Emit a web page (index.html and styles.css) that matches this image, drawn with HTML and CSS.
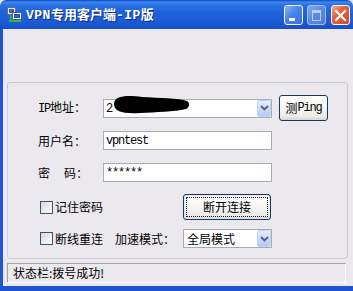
FILE: index.html
```html
<!DOCTYPE html>
<html>
<head>
<meta charset="utf-8">
<link rel="stylesheet" href="styles.css">
</head>
<body>
<div class="window">
  <div class="titlebar">
    <svg class="appicon" width="15" height="16" viewBox="0 0 15 16">
      <rect x="0.5" y="0.5" width="8" height="7" fill="#e8e8e8" stroke="#6a6a7a"/>
      <rect x="2" y="2" width="5" height="4" fill="#2a5fd8"/>
      <rect x="5.5" y="5.5" width="9" height="7" fill="#f0f0f0" stroke="#5a5a6a"/>
      <rect x="7" y="7" width="6" height="4" fill="#1f5ad0"/>
      <rect x="2" y="13" width="12" height="2" fill="#2fb84a"/>
      <rect x="3" y="8" width="1.5" height="5" fill="#2fb84a"/>
      <rect x="9" y="12.5" width="1.5" height="1" fill="#2fb84a"/>
    </svg>
    <div class="title"><span class="tlat">VPN</span>专用客户端<span class="tlat">-IP</span>版</div>
    <div class="tbtns">
      <div class="tb min"><span class="minbar"></span></div>
      <div class="tb max"><span class="maxbox"></span></div>
      <div class="tb close">
        <svg width="13" height="13" viewBox="0 0 13 13"><path d="M2 2 L11 11 M11 2 L2 11" stroke="#fff" stroke-width="2.2" stroke-linecap="square"/></svg>
      </div>
    </div>
  </div>
  <div class="client">
    <div class="group">
      <div class="row r1">
        <div class="lbl"><span class="lat">IP</span>地址：</div>
        <div class="combo ipcombo">
          <div class="val"><span class="lat">2</span></div>
          <div class="arrow"><svg width="9" height="6" viewBox="0 0 9 6"><path d="M1 1 L4.5 4.5 L8 1" fill="none" stroke="#4d6185" stroke-width="1.8"/></svg></div>
          <svg class="redact" width="78" height="20" viewBox="0 0 78 20"><path d="M2 9 C2 1, 14 0, 30 2 C48 3, 66 3, 75 6 C78 8, 78 12, 74 14 C62 17, 44 17, 28 18 C12 19, 2 17, 2 9 Z" fill="#000"/></svg>
        </div>
        <div class="btn ping">测<span class="lat">Ping</span></div>
      </div>
      <div class="row r2">
        <div class="lbl">用户名：</div>
        <div class="edit"><span class="lat">vpntest</span></div>
      </div>
      <div class="row r3">
        <div class="lbl">密<span class="sp"></span>码：</div>
        <div class="edit"><span class="lat">******</span></div>
      </div>
      <div class="row r4">
        <div class="chkwrap"><span class="chk"></span><span class="chktxt">记住密码</span></div>
        <div class="btn disc">断开连接</div>
      </div>
      <div class="row r5">
        <div class="chkwrap"><span class="chk"></span><span class="chktxt">断线重连</span><span class="mode">加速模式：</span></div>
        <div class="combo modecombo">
          <div class="val">全局模式</div>
          <div class="arrow"><svg width="9" height="6" viewBox="0 0 9 6"><path d="M1 1 L4.5 4.5 L8 1" fill="none" stroke="#4d6185" stroke-width="1.8"/></svg></div>
        </div>
      </div>
    </div>
    <div class="status">状态栏:拨号成功!</div>
  </div>
</div>
</body>
</html>
```
FILE: styles.css
```css
html, body {
  margin: 0;
  padding: 0;
}
body {
  width: 353px;
  height: 291px;
  overflow: hidden;
  font-family: "Noto Sans CJK SC", sans-serif;
  font-size: 12px;
  color: #000;
  background: #ebe9ed;
}
.window {
  width: 353px;
  height: 291px;
  display: flex;
  flex-direction: column;
}
.titlebar {
  height: 29px;
  flex: none;
  display: flex;
  align-items: center;
  padding: 0 3px 0 7px;
  border-radius: 6px 6px 0 0;
  background: linear-gradient(to bottom, #0a48cc 0%, #3f86ec 7%, #2b74e4 16%, #1f64da 40%, #1b5dd5 70%, #1650c8 100%);
}
.appicon {
  flex: none;
  margin-top: 1px;
}
.title {
  margin-left: 4px;
  color: #fff;
  font-weight: bold;
  font-size: 13px;
  line-height: 16px;
  text-shadow: 1px 1px 0 #0c2a8a;
  white-space: nowrap;
}
.tlat {
  font-family: "Liberation Mono", "Courier New", monospace;
  font-weight: bold;
  font-size: 13px;
  letter-spacing: 0.5px;
}
.tbtns {
  margin-left: auto;
  display: flex;
  gap: 4px;
  margin-top: 1px;
}
.tb {
  width: 19px;
  height: 20px;
  box-sizing: border-box;
  border: 1px solid #f4f7ff;
  border-radius: 3px;
  position: relative;
  display: flex;
  align-items: center;
  justify-content: center;
}
.tb.min {
  background: linear-gradient(135deg, #8fb2f5 0%, #4a83ea 45%, #3a70e0 100%);
}
.tb.max {
  border-color: #a9c0ee;
  background: linear-gradient(135deg, #86a9ec 0%, #5a88e2 50%, #4c7bdc 100%);
}
.tb.close {
  background: linear-gradient(135deg, #f3a890 0%, #e4603c 40%, #d8482a 100%);
  margin-left: 1px;
}
.minbar {
  position: absolute;
  left: 4px;
  bottom: 3px;
  width: 6px;
  height: 3px;
  background: #fff;
}
.maxbox {
  width: 9px;
  height: 11px;
  box-sizing: border-box;
  border: 1px solid #b9cdf4;
  border-top-width: 3px;
}
.client {
  flex: 1;
  display: flex;
  flex-direction: column;
  padding-left: 4px;
  border-left: 3px solid #1f55d6;
  border-bottom: 5px solid #1f52d0;
  background: #ebe9ed;
}
.group {
  margin-top: 53px;
  width: 341px;
  height: 177px;
  box-sizing: border-box;
  border: 1px solid #cfcdd3;
  border-radius: 3px;
  padding: 12px 0 0 29px;
  display: flex;
  flex-direction: column;
}
.row {
  display: flex;
  align-items: center;
}
.r1 { height: 26px; }
.r2 { height: 19px; margin-top: 10px; }
.r3 { height: 19px; margin-top: 13px; }
.r4 { height: 26px; margin-top: 12px; }
.r5 { height: 19px; margin-top: 9px; }
.lbl {
  width: 65px;
  padding-left: 1px;
  line-height: 14px;
  white-space: nowrap;
}
.lat {
  font-family: "Liberation Mono", "Courier New", monospace;
  font-size: 12px;
  letter-spacing: -1.2px;
}
.sp {
  display: inline-block;
  width: 14px;
}
.combo {
  position: relative;
  height: 19px;
  box-sizing: border-box;
  border: 1px solid #a5acb2;
  background: #fff;
  display: flex;
  align-items: center;
}
.ipcombo { width: 169px; }
.modecombo { width: 89px; }
.val {
  flex: 1;
  padding-left: 2px;
  line-height: 14px;
  white-space: nowrap;
}
.modecombo .val { padding-left: 3px; }
.arrow {
  width: 14px;
  height: 17px;
  box-sizing: border-box;
  border: 1px solid #c3d3f5;
  border-radius: 2px;
  background: linear-gradient(to bottom, #e6eeff 0%, #c6d6f8 60%, #b6c8f2 100%);
  display: flex;
  align-items: center;
  justify-content: center;
}
.redact {
  position: absolute;
  left: 8px;
  top: -5px;
}
.btn {
  box-sizing: border-box;
  border: 1px solid #1c3562;
  border-radius: 3px;
  background: linear-gradient(to bottom, #ffffff 0%, #f6f6f3 50%, #ecebe6 85%, #d8d6d2 100%);
  display: flex;
  align-items: center;
  justify-content: center;
  white-space: nowrap;
  line-height: 14px;
}
.ping {
  width: 49px;
  height: 26px;
  margin-left: 7px;
}
.disc {
  width: 88px;
  height: 26px;
  outline: 1px dotted #222;
  outline-offset: -4px;
  box-shadow: inset 0 0 0 1px #dbe6fb;
}
.edit {
  width: 169px;
  height: 19px;
  box-sizing: border-box;
  border: 1px solid #a5acb2;
  background: #fff;
  padding-left: 2px;
  display: flex;
  align-items: center;
  white-space: nowrap;
}
.chkwrap {
  width: 146px;
  display: flex;
  align-items: center;
  white-space: nowrap;
}
.chk {
  width: 13px;
  height: 13px;
  box-sizing: border-box;
  margin-left: 3px;
  border: 1px solid #3b5375;
  background: linear-gradient(135deg, #d8d8dc 0%, #f2f2f2 70%, #ffffff 100%);
}
.chktxt {
  margin-left: 2px;
  line-height: 14px;
}
.mode {
  margin-left: 12px;
  line-height: 14px;
}
.status {
  margin-top: 4px;
  width: 339px;
  height: 20px;
  box-sizing: border-box;
  border: 1px solid;
  border-color: #a3a3a6 #ffffff #ffffff #a3a3a6;
  padding-left: 5px;
  line-height: 18px;
  white-space: nowrap;
}
```
